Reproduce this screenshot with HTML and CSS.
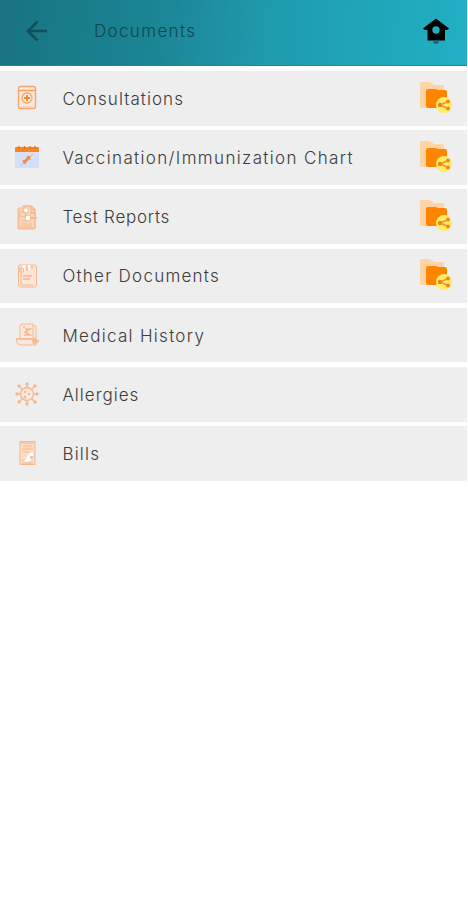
FILE: index.html
```html
<!DOCTYPE html>
<html lang="en">
<head>
<meta charset="utf-8">
<title>Documents</title>
<link rel="stylesheet" href="styles.css">
</head>
<body>
<svg class="defs" width="0" height="0" aria-hidden="true">
  <symbol id="share-folder" viewBox="0 0 34 32">
    <path d="M1 3Q1 1 3 1H11L15 4H23Q25 4 25 6V27H3Q1 27 1 25Z" fill="#ffd4a4"/>
    <path d="M7 10Q7 8 9 8H17L19 9H26Q28 9 28 11V27H9Q7 27 7 25Z" fill="#ff8500"/>
    <circle cx="25" cy="24" r="8" fill="#ffed66"/>
    <path d="M29 20.5L21 24L29 27.5" fill="none" stroke="#f9912d" stroke-width="1.5"/>
    <g fill="#f58220"><circle cx="29" cy="20.5" r="1.9"/><circle cx="21" cy="24" r="2.2"/><circle cx="29" cy="27.5" r="1.9"/></g>
  </symbol>
</svg>
<header class="bar">
  <svg class="back" viewBox="0 0 22 22"><path d="M11.5 1.5L2 11L11.5 20.5M2 11H21"/></svg>
  <h1 class="title">Documents</h1>
  <svg class="home" viewBox="0 0 26 26"><path fill-rule="evenodd" d="M13 .5L26 10.5L24.5 12H22V22.5H4.500V12H1.500L0 10.500ZM13 8.300A3.700 3.700 0 1 0 13 15.700A3.700 3.700 0 1 0 13 8.300Z"/><path d="M10 23.500H16L15 25.500H11Z" fill="#12517c"/></svg>
</header>
<main class="list">
  <div class="row">
    <svg class="icon" viewBox="0 0 24 26"><rect x="3.500" y="1.500" width="17" height="22" rx="2" fill="#fbe9dc" stroke="#f5a66a" stroke-width="1.400"/><path d="M4 5.500H20" stroke="#f4a062" stroke-width="1.500"/><path d="M6 22H18" stroke="#f9cdd3" stroke-width="2"/><circle cx="12" cy="13" r="5" fill="none" stroke="#f5a66a" stroke-width="1.300"/><path d="M9 13H15M12 10V16" stroke="#f58634" stroke-width="1.800"/></svg>
    <span class="label consultations">Consultations</span>
    <svg class="share"><use href="#share-folder"/></svg>
  </div>
  <div class="row">
    <svg class="icon" viewBox="0 0 24 26"><rect y="5" width="24" height="19" rx="1" fill="#d3e0f8"/><path d="M0 4Q0 3 1 3H23Q24 3 24 4V8H0Z" fill="#f88429"/><path d="M4 2V5M9.500 2V5M15 2V5M20 2V5" stroke="#ee6e12" stroke-width="1.300"/><path d="M5.500 22L18 10" stroke="#efac7d" stroke-width="1"/><path d="M8.500 19L15 12.500" stroke="#f58a3b" stroke-width="3"/><path d="M12 12L16 16M8 16L11 20" stroke="#f58a3b" stroke-width="1"/></svg>
    <span class="label vaccination">Vaccination/Immunization Chart</span>
    <svg class="share"><use href="#share-folder"/></svg>
  </div>
  <div class="row">
    <svg class="icon soft" viewBox="0 0 24 26"><path d="M3 4H8V2H17L20 5V25H3Z" fill="#fad7bd"/><path d="M8 2H16V8M4 5V24H20V15M6 20H17M6 22H17M7 17H12"/><path d="M9 4H13V9H8Z" fill="#fff"/><circle cx="7.500" cy="10" r="3"/><circle cx="13" cy="14" r="3" fill="#fff"/><path d="M15 3L20 7M15 9H20V12M15 14H22" stroke-width="1.800"/></svg>
    <span class="label reports">Test Reports</span>
    <svg class="share"><use href="#share-folder"/></svg>
  </div>
  <div class="row">
    <svg class="icon soft" viewBox="0 0 24 26"><rect x="3.500" y="2" width="18" height="22" rx="2" fill="#fae5d7"/><path d="M6 5V22H18"/><path d="M8 13H17M8 16H15" stroke-width="1.400"/><path d="M9 2V8M14 2V7" stroke="#fff" stroke-width="2.500"/><circle cx="6.500" cy="7" r="2.300"/><path d="M12 3V8M17 3V6" stroke-width="1.500"/></svg>
    <span class="label other">Other Documents</span>
    <svg class="share"><use href="#share-folder"/></svg>
  </div>
  <div class="row">
    <svg class="icon soft" viewBox="0 0 24 26"><path d="M5 16V4Q5 2 8 2H18V17M18 4H21V18M1 17H21V23H5Q2 23 1 17Z" fill="#fae8dc"/><path d="M1 17H21M8 5H10M10 7H15L10 10L15 13H9" stroke-width="1.600"/><path d="M17 19H24M19 16L22 21M18 22L21 19" stroke-width="1.800"/></svg>
    <span class="label history">Medical History</span>
  </div>
  <div class="row">
    <svg class="icon soft" viewBox="0 0 24 26"><circle cx="12" cy="13" r="6.500" fill="#f8e8de" stroke-width="1.400"/><path d="M12 3V6M12 20V24M1.500 13H5M19 13H23M4 5L7.500 8.500M20 5L16.500 8.500M4 21L7.500 17.500M20 21L16.500 17.500" stroke-width="1.400"/><g fill="#f5b68c" stroke="none"><circle cx="12" cy="3" r="1.700"/><circle cx="12" cy="23" r="1.700"/><circle cx="2" cy="13" r="1.700"/><circle cx="22" cy="13" r="1.700"/><circle cx="4" cy="5" r="1.700"/><circle cx="20" cy="5" r="1.700"/><circle cx="4" cy="21" r="1.700"/><circle cx="20" cy="21" r="1.700"/><circle cx="10" cy="11" r="1.200"/><circle cx="14" cy="13" r="1.200"/><circle cx="10" cy="16" r="1.200"/></g></svg>
    <span class="label allergies">Allergies</span>
  </div>
  <div class="row">
    <svg class="icon soft" viewBox="0 0 24 26"><rect x="5" y="1.500" width="15" height="23" fill="#fbdcc5"/><path d="M5 3H20M8 6H17M7 9H18M8 12H14M7 20H10M7 23H18"/><path d="M9 21L15 13L18 12V18L13 22Z" fill="#fff" stroke="none"/><path d="M15 16H18V19H15Z" fill="#d2cfd0" stroke="none"/></svg>
    <span class="label bills">Bills</span>
  </div>
</main>
</body>
</html>
```
FILE: styles.css
```css
* { box-sizing: border-box; }
body { margin: 0; background: #fff; font-family: Inter, "Liberation Sans", sans-serif; width: 467px; }
.defs { display: none; }
.bar {
  height: 66px;
  padding: 0 18px 4px 26px;
  display: flex;
  align-items: center;
  background: linear-gradient(95deg, #187382 0%, #1b8594 33%, #1f9bae 58%, #21b0c4 100%);
  border-bottom: 1px solid #168d9f;
}
.back { width: 22px; height: 22px; fill: none; stroke: #115057; stroke-width: 2.6; }
.title { margin: 0 auto 0 46px; font-size: 17px; font-weight: 300; color: #10454f; letter-spacing: 1.35px; }
.home { width: 26px; height: 26px; }
.list { display: flex; flex-direction: column; gap: 4.6px; padding-top: 5px; }
.row { height: 54.6px; padding: 0 14px 0 15px; background: #eee; display: flex; align-items: center; }
.icon { width: 24px; height: 26px; flex: none; margin-right: 23.4px; }
.soft { fill: none; stroke: #f6b88f; stroke-width: 1; }
.label { font-size: 17px; font-weight: 300; color: #3c3c3c; white-space: nowrap; padding-top: 1px; }
.share { width: 34px; height: 32px; flex: none; margin: 0 0 3px auto; }
.consultations { letter-spacing: 1.05px; }
.vaccination { letter-spacing: 1.35px; }
.reports { letter-spacing: .75px; }
.other { letter-spacing: 1.25px; }
.history { letter-spacing: 1.3px; }
.allergies { letter-spacing: 1px; }
.bills { letter-spacing: 1.2px; }
```
